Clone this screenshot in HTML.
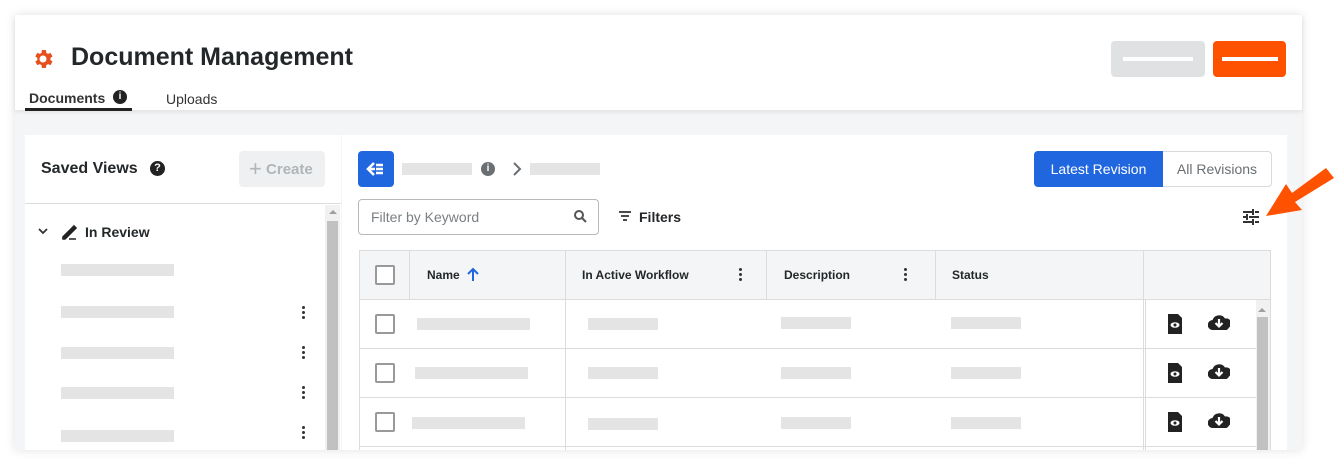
<!DOCTYPE html><html><head><style>
*{box-sizing:border-box;margin:0;padding:0}
body{width:1335px;height:464px;background:#fff;font-family:"Liberation Sans",sans-serif;color:#232729;position:relative;overflow:hidden}
.abs{position:absolute}
.card{left:15px;top:15px;width:1287px;height:435px;background:#f4f5f6;box-shadow:0 0 10px rgba(0,0,0,.12)}
.hdr{left:15px;top:15px;width:1287px;height:95px;background:#fff;box-shadow:0 2px 4px rgba(0,0,0,.08)}
.sk{position:absolute;background:#e4e4e4;height:12px}
.panel{background:#fff}
.th{font-size:12px;font-weight:bold;position:absolute;top:268px}
.dots{position:absolute;width:3px}
.dots i{display:block;width:3px;height:3px;background:#333;border-radius:50%;margin-bottom:2px}
.cb{position:absolute;width:20px;height:20px;border:2px solid #999;border-radius:2px;background:#fff}
.hl{position:absolute;height:1px;background:#dcdcdc}
.vl{position:absolute;width:1px;background:#dcdcdc}
</style></head><body>
<div class="abs card"></div>
<div class="abs hdr"></div>
<svg class="abs" style="left:31px;top:47px" width="24" height="24" viewBox="0 0 24 24"><path fill="#e5501e" d="M19.4 13a7.5 7.5 0 000-2l2.1-1.6-2-3.5-2.5 1a7.6 7.6 0 00-1.7-1L14.9 3h-4l-.4 2.9a7.6 7.6 0 00-1.7 1l-2.5-1-2 3.5L6.4 11a7.5 7.5 0 000 2l-2.1 1.6 2 3.5 2.5-1c.5.4 1.1.7 1.7 1l.4 2.9h4l.4-2.9c.6-.3 1.2-.6 1.7-1l2.5 1 2-3.5zM12 15.5A3.5 3.5 0 1112 8.5a3.5 3.5 0 010 7z"/></svg>
<div class="abs" style="left:71px;top:43px;font-size:25px;font-weight:bold">Document Management</div>
<div class="abs" style="left:29px;top:90px;font-size:14px;font-weight:bold;color:#333">Documents</div>
<div class="abs" style="left:113px;top:90px;width:14px;height:14px;border-radius:50%;background:#222;color:#fff;font-size:10px;font-weight:bold;text-align:center;line-height:14px">i</div>
<div class="abs" style="left:25px;top:108px;width:107px;height:3px;background:#222"></div>
<div class="abs" style="left:166px;top:91px;font-size:14px;color:#333">Uploads</div>
<div class="abs" style="left:1111px;top:41px;width:94px;height:36px;background:#dfe1e3;border-radius:4px"></div>
<div class="abs" style="left:1123px;top:57px;width:70px;height:4px;background:#fff"></div>
<div class="abs" style="left:1213px;top:41px;width:73px;height:36px;background:#ff5200;border-radius:4px"></div>
<div class="abs" style="left:1222px;top:57px;width:56px;height:4px;background:#fff"></div>

<div class="abs panel" style="left:25px;top:135px;width:316px;height:315px"></div>
<div class="abs panel" style="left:342px;top:135px;width:945px;height:315px"></div>
<div class="abs" style="left:41px;top:160px;font-size:16px;font-weight:bold">Saved Views</div>
<div class="abs" style="left:150px;top:161px;width:15px;height:15px;border-radius:50%;background:#222;color:#fff;font-size:11px;font-weight:bold;text-align:center;line-height:15px">?</div>
<div class="abs" style="left:239px;top:151px;width:86px;height:36px;background:#eef0f1;border-radius:4px;color:#b0b5b9;font-size:15px;font-weight:bold;line-height:36px;padding-left:10px"><span style="font-size:22px;font-weight:normal;vertical-align:-2px">+</span> Create</div>
<div class="hl" style="left:25px;top:203px;width:316px"></div>
<div class="abs" style="left:325px;top:205px;width:15px;height:245px;background:#f1f1f1"></div>
<div class="abs" style="left:327px;top:221px;width:11px;height:229px;background:#c1c1c1"></div>
<div class="abs" style="left:329px;top:210px;width:0;height:0;border:4px solid transparent;border-bottom-color:#a0a0a0;border-top:0"></div>
<svg class="abs" style="left:38px;top:228px" width="10" height="7"><path d="M1 1l4 4 4-4" stroke="#333" stroke-width="1.8" fill="none"/></svg>
<svg class="abs" style="left:61px;top:224px" width="16" height="16"><path d="M2 13l8-8 2 2-8 8H2zM11 4l2-2 2 2-2 2zM8 15h7" stroke="#222" stroke-width="1.6" fill="#222"/></svg>
<div class="abs" style="left:85px;top:224px;font-size:14px;font-weight:bold">In Review</div>
<div class="sk" style="left:61px;top:264px;width:113px"></div>
<div class="sk" style="left:61px;top:306px;width:113px"></div>
<div class="sk" style="left:61px;top:347px;width:113px"></div>
<div class="sk" style="left:61px;top:387px;width:113px"></div>
<div class="sk" style="left:61px;top:430px;width:113px"></div>
<div class="dots" style="left:302px;top:306px"><i></i><i></i><i></i></div>
<div class="dots" style="left:302px;top:346px"><i></i><i></i><i></i></div>
<div class="dots" style="left:302px;top:386px"><i></i><i></i><i></i></div>
<div class="dots" style="left:302px;top:426px"><i></i><i></i><i></i></div>

<div class="abs" style="left:358px;top:151px;width:36px;height:36px;background:#2066df;border-radius:4px"></div>
<svg class="abs" style="left:366px;top:161px" width="20" height="16"><path d="M8 2L2 8l6 6" stroke="#fff" stroke-width="2.6" fill="none"/><path d="M3 8h6M10 4h7M10 8h7M10 12h7" stroke="#fff" stroke-width="2.4"/></svg>
<div class="sk" style="left:402px;top:163px;width:70px"></div>
<div class="abs" style="left:481px;top:162px;width:14px;height:14px;border-radius:50%;background:#6a6f73;color:#fff;font-size:10px;font-weight:bold;text-align:center;line-height:14px">i</div>
<svg class="abs" style="left:512px;top:162px" width="10" height="14"><path d="M2 1l6 6-6 6" stroke="#6a6f73" stroke-width="2" fill="none"/></svg>
<div class="sk" style="left:530px;top:163px;width:70px"></div>
<div class="abs" style="left:1034px;top:151px;width:129px;height:36px;background:#2066df;border-radius:4px 0 0 4px;color:#fff;font-size:14px;line-height:36px;text-align:center">Latest Revision</div>
<div class="abs" style="left:1163px;top:151px;width:109px;height:36px;border:1px solid #d6dadc;border-left:0;border-radius:0 4px 4px 0;color:#6a6f73;font-size:14px;line-height:34px;text-align:center">All Revisions</div>
<div class="abs" style="left:358px;top:199px;width:241px;height:36px;border:1px solid #b5b9bc;border-radius:4px;color:#7a7f83;font-size:14px;line-height:34px;padding-left:12px">Filter by Keyword</div>
<svg class="abs" style="left:574px;top:210px" width="13" height="13" viewBox="0 0 13 13"><circle cx="5" cy="5" r="4" stroke="#555" stroke-width="2" fill="none"/><path d="M8 8l4 4" stroke="#555" stroke-width="2"/></svg>
<svg class="abs" style="left:619px;top:211px" width="12" height="10"><path d="M0 1h12M2 5h8M4 9h4" stroke="#333" stroke-width="1.8"/></svg>
<div class="abs" style="left:639px;top:209px;font-size:14px;font-weight:bold">Filters</div>
<svg class="abs" style="left:1243px;top:209px" width="16" height="16" viewBox="0 0 16 16"><path d="M0 3h9M12 3h4M10 0v6M0 8h3M6 8h10M4 5v6M0 13h9M12 13h4M10 10v6" stroke="#333" stroke-width="2"/></svg>
<svg class="abs" style="left:1262px;top:166px" width="73" height="52"><path d="M72 12L64 2 30 27 24 18 4 50 40 44 33 36z" fill="#ff5200"/></svg>

<div class="abs" style="left:359px;top:250px;width:912px;height:200px;border:1px solid #dcdcdc;border-bottom:0"></div>
<div class="abs" style="left:360px;top:251px;width:910px;height:48px;background:#f4f5f6"></div>
<div class="hl" style="left:359px;top:299px;width:912px"></div>
<div class="hl" style="left:359px;top:348px;width:897px"></div>
<div class="hl" style="left:359px;top:397px;width:897px"></div>
<div class="hl" style="left:359px;top:446px;width:897px"></div>
<div class="vl" style="left:409px;top:250px;height:49px"></div>
<div class="vl" style="left:565px;top:250px;height:200px"></div>
<div class="vl" style="left:766px;top:250px;height:49px"></div>
<div class="vl" style="left:935px;top:250px;height:49px"></div>
<div class="vl" style="left:1143px;top:250px;height:200px"></div>
<div class="vl" style="left:1145px;top:300px;height:150px"></div>
<div class="cb" style="left:375px;top:265px"></div>
<div class="th" style="left:427px">Name</div>
<svg class="abs" style="left:467px;top:267px" width="12" height="14"><path d="M6 14V2M1 7l5-5 5 5" stroke="#2066df" stroke-width="2" fill="none"/></svg>
<div class="th" style="left:582px">In Active Workflow</div>
<div class="dots" style="left:739px;top:268px"><i></i><i></i><i></i></div>
<div class="th" style="left:784px">Description</div>
<div class="dots" style="left:904px;top:268px"><i></i><i></i><i></i></div>
<div class="th" style="left:952px">Status</div>
<div class="abs" style="left:1256px;top:300px;width:14px;height:150px;background:#f1f1f1"></div>
<div class="abs" style="left:1257px;top:317px;width:11px;height:133px;background:#c1c1c1"></div>
<div class="abs" style="left:1258px;top:308px;border:4px solid transparent;border-bottom-color:#a0a0a0;border-top:0"></div>

<div class="cb" style="left:375px;top:314px"></div>
<div class="cb" style="left:375px;top:363px"></div>
<div class="cb" style="left:375px;top:412px"></div>
<div class="sk" style="left:417px;top:318px;width:113px"></div><div class="sk" style="left:588px;top:318px;width:70px"></div><div class="sk" style="left:781px;top:317px;width:70px"></div><div class="sk" style="left:951px;top:317px;width:70px"></div>
<div class="sk" style="left:415px;top:367px;width:113px"></div><div class="sk" style="left:588px;top:367px;width:70px"></div><div class="sk" style="left:781px;top:367px;width:70px"></div><div class="sk" style="left:951px;top:367px;width:70px"></div>
<div class="sk" style="left:412px;top:417px;width:113px"></div><div class="sk" style="left:588px;top:418px;width:70px"></div><div class="sk" style="left:781px;top:417px;width:70px"></div><div class="sk" style="left:951px;top:417px;width:70px"></div>

<svg width="0" height="0" style="position:absolute"><defs>
<g id="doc"><path d="M0 0h10l4 4v16H0z" fill="#222"/><ellipse cx="7" cy="11" rx="4.5" ry="2.8" fill="#fff"/><circle cx="7" cy="11" r="1.5" fill="#222"/></g>
<g id="cl"><path d="M5 17a5 5 0 01-.5-10A7 7 0 0117 5.5a5 5 0 014 9 4.5 4.5 0 01-2.5 2.5z" fill="#222"/><path d="M11 6v7M7.5 10l3.5 3.5 3.5-3.5" stroke="#fff" stroke-width="2.2" fill="none"/></g>
</defs></svg>
<svg class="abs" style="left:1168px;top:314px" width="16" height="22"><use href="#doc"/></svg>
<svg class="abs" style="left:1208px;top:313px" width="22" height="18"><use href="#cl"/></svg>
<svg class="abs" style="left:1168px;top:363px" width="16" height="22"><use href="#doc"/></svg>
<svg class="abs" style="left:1208px;top:362px" width="22" height="18"><use href="#cl"/></svg>
<svg class="abs" style="left:1168px;top:412px" width="16" height="22"><use href="#doc"/></svg>
<svg class="abs" style="left:1208px;top:411px" width="22" height="18"><use href="#cl"/></svg>
</body></html>
